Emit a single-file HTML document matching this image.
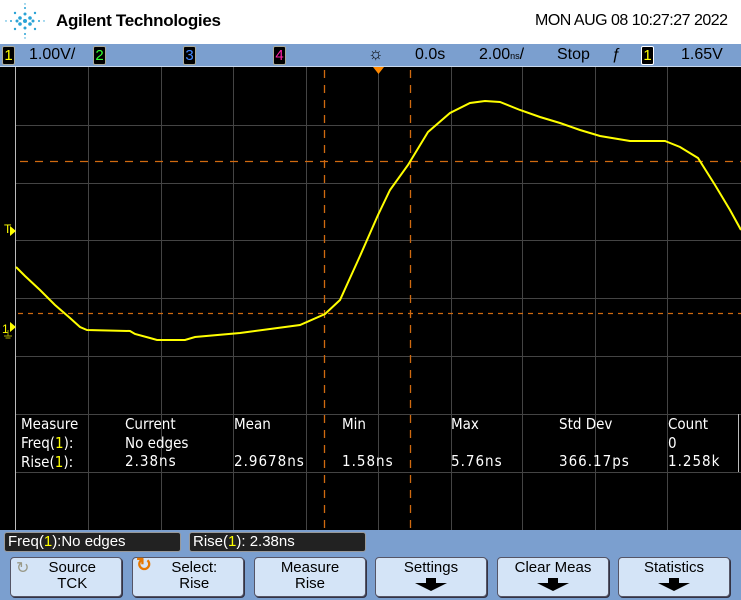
<!DOCTYPE html>
<html><head><meta charset="utf-8"><style>
*{margin:0;padding:0;box-sizing:border-box}
body{width:741px;height:600px;overflow:hidden;background:#fff;font-family:"Liberation Sans",sans-serif;position:relative}
.a{position:absolute;white-space:nowrap}
.hdr{left:0;top:0;width:741px;height:44px;background:#fff}
.bar{left:0;top:44px;width:741px;height:23px;background:#7b9fcf;border-bottom:1px solid #c8d8ec}
.bt{font-size:16px;color:#000;top:46px}
.chb{top:46px;width:13px;height:19px;background:#000;border:1px solid #aa9;border-radius:2px;font-size:15px;text-align:center;line-height:18px}
.grid{left:0;top:67px;width:741px;height:463px;background:#000}
.m{font-size:15px;color:#fff;font-family:"DejaVu Sans Condensed","Liberation Sans",sans-serif}
.bot{left:0;top:530px;width:741px;height:70px;background:#7b9fcf}
.st{top:532px;height:20px;background:#222;border:1px solid #999;border-radius:3px;color:#fff;font-size:15px;padding-left:3px;line-height:18px}
.btn{top:557px;width:112px;height:40px;background:#d4e4f7;border:1px solid #556;border-radius:4px;box-shadow:1px 1px 0 #334;text-align:center;font-size:15px;line-height:16px;padding-top:2px;color:#000}
.y{color:#ff0}
</style></head><body>
<div class="a hdr"></div>
<svg class="a" style="left:5px;top:3px" width="40" height="36" viewBox="0 0 40 36">
<g fill="#29a3d6">
<circle cx="20" cy="18" r="2"/><circle cx="15" cy="15" r="1.8"/><circle cx="25" cy="15" r="1.8"/><circle cx="15" cy="21" r="1.8"/><circle cx="25" cy="21" r="1.8"/>
<circle cx="20" cy="11" r="1.5"/><circle cx="20" cy="25" r="1.5"/><circle cx="12" cy="18" r="1.5"/><circle cx="28" cy="18" r="1.5"/>
<circle cx="10" cy="10" r="1.2"/><circle cx="30" cy="10" r="1.2"/><circle cx="10" cy="26" r="1.2"/><circle cx="30" cy="26" r="1.2"/>
<circle cx="20" cy="5" r="1"/><circle cx="20" cy="31" r="1"/><circle cx="6" cy="18" r="1"/><circle cx="34" cy="18" r="1"/>
<circle cx="20" cy="1" r=".7"/><circle cx="20" cy="35" r=".7"/><circle cx="1" cy="18" r=".7"/><circle cx="39" cy="18" r=".7"/>
</g></svg>
<div class="a" style="left:56px;top:11px;font-size:17px;font-weight:bold;letter-spacing:-0.3px">Agilent Technologies</div>
<div class="a" style="left:535px;top:12px;font-size:16px;letter-spacing:-0.5px">MON AUG 08 10:27:27 2022</div>
<div class="a bar"></div>
<div class="a chb y" style="left:2px">1</div>
<div class="a bt" style="left:29px">1.00V/</div>
<div class="a chb" style="left:93px;color:#3f3">2</div>
<div class="a chb" style="left:183px;color:#48f">3</div>
<div class="a chb" style="left:273px;color:#f2a">4</div>
<div class="a bt" style="left:368px;top:44px;font-size:17px">☼</div>
<div class="a bt" style="left:415px">0.0s</div>
<div class="a bt" style="left:479px">2.00<span style="font-size:9px">ns</span>/</div>
<div class="a bt" style="left:557px">Stop</div>
<div class="a bt" style="left:612px">ƒ</div>
<div class="a chb y" style="left:641px;border-color:#fff">1</div>
<div class="a bt" style="left:681px">1.65V</div>
<div class="a grid"></div>
<svg class="a" style="left:0;top:0" width="741" height="530">
<g stroke="#444" stroke-width="1">
<line x1="88.5" y1="67" x2="88.5" y2="530"/><line x1="161.5" y1="67" x2="161.5" y2="530"/><line x1="233.5" y1="67" x2="233.5" y2="530"/><line x1="306.5" y1="67" x2="306.5" y2="530"/><line x1="378.5" y1="67" x2="378.5" y2="530"/><line x1="451.5" y1="67" x2="451.5" y2="530"/><line x1="522.5" y1="67" x2="522.5" y2="530"/><line x1="595.5" y1="67" x2="595.5" y2="530"/><line x1="667.5" y1="67" x2="667.5" y2="530"/>
<line x1="16" y1="125.5" x2="741" y2="125.5"/><line x1="16" y1="183.5" x2="741" y2="183.5"/><line x1="16" y1="240.5" x2="741" y2="240.5"/><line x1="16" y1="298.5" x2="741" y2="298.5"/><line x1="16" y1="356.5" x2="741" y2="356.5"/><line x1="16" y1="414.5" x2="741" y2="414.5"/><line x1="16" y1="472.5" x2="741" y2="472.5"/>
</g>
<line x1="15.5" y1="67" x2="15.5" y2="530" stroke="#bbb"/>
<line x1="738.5" y1="414" x2="738.5" y2="472" stroke="#bbb"/>
<g stroke="#d06a10" stroke-width="1.3" stroke-dasharray="8,7">
<line x1="20" y1="161.5" x2="741" y2="161.5"/>
<line x1="18" y1="313.5" x2="741" y2="313.5" stroke-dasharray="5,5"/>
<line x1="324.5" y1="70" x2="324.5" y2="530"/>
<line x1="410.5" y1="70" x2="410.5" y2="530"/>
</g>
<polygon points="373,67 384,67 378.5,74" fill="#f80"/>
<polyline fill="none" stroke="#ff0" stroke-width="2" points="16,267 25,276 40,290 55,305 70,318 80,327 87,330 130,331 135,334 150,338 157,340 185,340 195,337 240,333 300,325 325,314 340,300 360,256 378,215 390,190 408,165 428,132 450,113 470,103 485,101 500,102 520,110 540,117 560,123 580,130 600,136 630,141 665,141 680,147 698,158 715,185 730,210 741,230"/>
<text x="4" y="233" fill="#ff0" font-size="12" font-family="Liberation Sans">T</text>
<polygon points="10,226 16,231 10,236" fill="#ff0"/>
<text x="2" y="333" fill="#ff0" font-size="12" font-family="Liberation Sans">1</text>
<polygon points="10,322 16,327 10,332" fill="#ff0"/>
<path d="M8,330 V336 M4,336 H12 M5.5,338 H10.5" stroke="#aa0" fill="none"/>
</svg>
<div class="a m" style="left:21px;top:415px">Measure</div>
<div class="a m" style="left:125px;top:415px">Current</div>
<div class="a m" style="left:234px;top:415px">Mean</div>
<div class="a m" style="left:342px;top:415px">Min</div>
<div class="a m" style="left:451px;top:415px">Max</div>
<div class="a m" style="left:559px;top:415px">Std Dev</div>
<div class="a m" style="left:668px;top:415px">Count</div>
<div class="a m" style="left:21px;top:434px">Freq(<span class="y">1</span>):</div>
<div class="a m" style="left:125px;top:434px">No edges</div>
<div class="a m" style="left:668px;top:434px">0</div>
<div class="a m" style="left:21px;top:453px">Rise(<span class="y">1</span>):</div>
<div class="a m" style="left:125px;top:452px;letter-spacing:1px">2.38ns</div>
<div class="a m" style="left:234px;top:452px;letter-spacing:1px">2.9678ns</div>
<div class="a m" style="left:342px;top:452px;letter-spacing:1px">1.58ns</div>
<div class="a m" style="left:451px;top:452px;letter-spacing:1px">5.76ns</div>
<div class="a m" style="left:559px;top:452px;letter-spacing:1px">366.17ps</div>
<div class="a m" style="left:668px;top:452px;letter-spacing:1px">1.258k</div>
<div class="a bot"></div>
<div class="a st" style="left:4px;width:177px">Freq(<span class="y">1</span>):No edges</div>
<div class="a st" style="left:189px;width:177px">Rise(<span class="y">1</span>): 2.38ns</div>
<div class="a btn" style="left:10px"><span style="position:absolute;left:5px;top:3px;color:#998;font-size:16px">↻</span>&nbsp;&nbsp;&nbsp;Source<br>&nbsp;&nbsp;&nbsp;TCK</div>
<div class="a btn" style="left:132px"><span style="position:absolute;left:3px;top:0px;color:#e67700;font-size:19px;font-weight:bold">↻</span>&nbsp;&nbsp;&nbsp;Select:<br>&nbsp;&nbsp;&nbsp;Rise</div>
<div class="a btn" style="left:254px">Measure<br>Rise</div>
<div class="a btn" style="left:375px">Settings<br><svg width="36" height="16" viewBox="0 0 36 16"><polygon points="13,2 23,2 23,7 34,7 18,15 2,7 13,7" fill="#000"/></svg></div>
<div class="a btn" style="left:497px">Clear Meas<br><svg width="36" height="16" viewBox="0 0 36 16"><polygon points="13,2 23,2 23,7 34,7 18,15 2,7 13,7" fill="#000"/></svg></div>
<div class="a btn" style="left:618px">Statistics<br><svg width="36" height="16" viewBox="0 0 36 16"><polygon points="13,2 23,2 23,7 34,7 18,15 2,7 13,7" fill="#000"/></svg></div>
</body></html>
